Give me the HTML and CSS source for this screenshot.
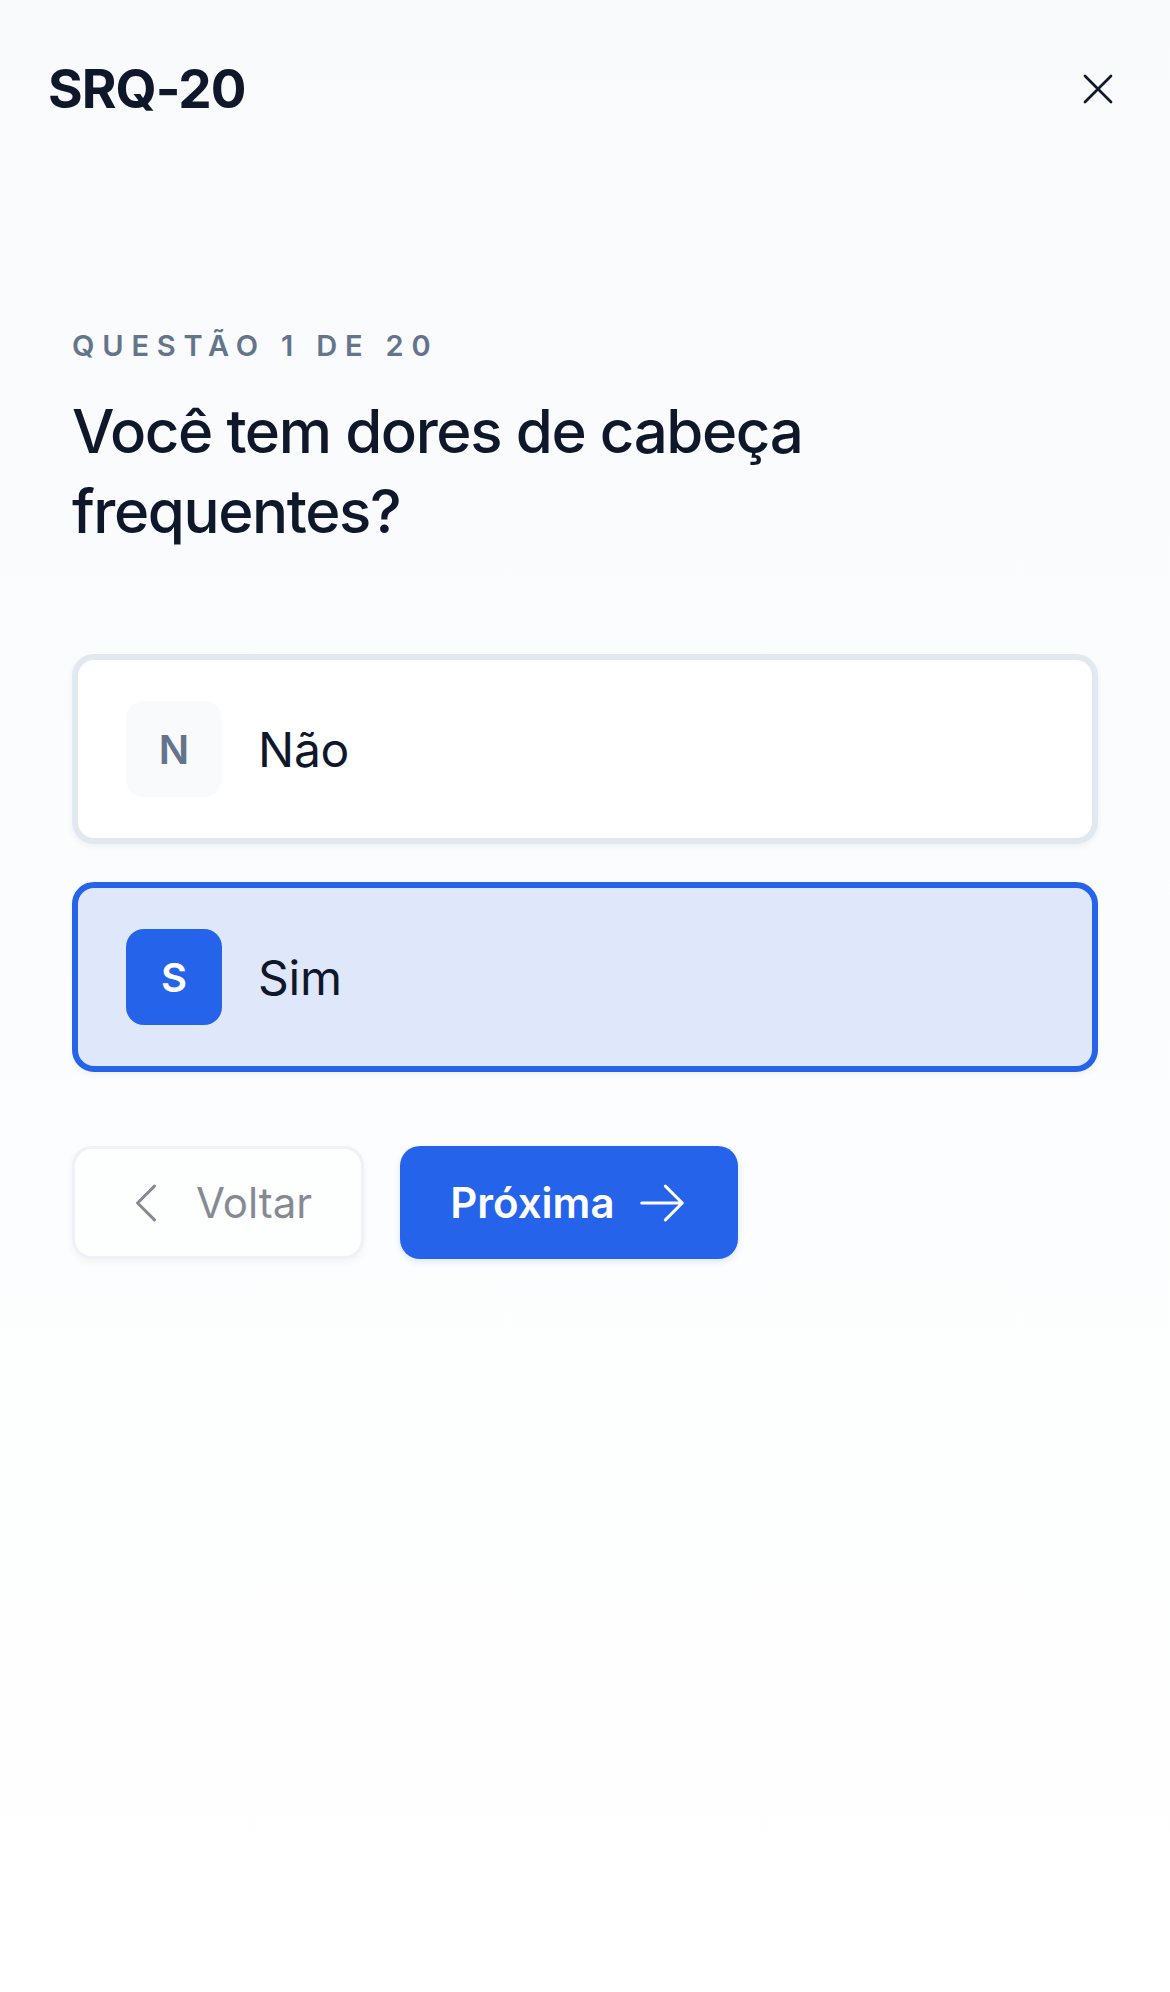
FILE: index.html
```html
<!DOCTYPE html>
<html lang="pt-BR">
<head>
    <meta charset="UTF-8" />
    <title>SRQ-20</title>
    <link rel="stylesheet" href="styles.css">
</head>
<body>
    <div class="screen">
        <header class="topbar">
            <h1 class="brand">SRQ-20</h1>
            <button class="close-btn" aria-label="Fechar">
                <svg viewBox="0 0 24 24" width="52" height="52" fill="none" stroke="currentColor" stroke-width="1.25" stroke-linecap="round" stroke-linejoin="round">
                    <path d="M6 18 18 6M6 6l12 12" />
                </svg>
            </button>
        </header>

        <main class="question">
            <p class="step">Questão 1 de 20</p>
            <h2 class="prompt">Você tem dores de cabeça frequentes?</h2>

            <div class="options">
                <button class="option">
                    <span class="key">N</span>
                    <span class="label">Não</span>
                </button>
                <button class="option selected">
                    <span class="key">S</span>
                    <span class="label">Sim</span>
                </button>
            </div>

            <div class="actions">
                <button class="btn btn-back" disabled>
                    <svg viewBox="0 0 24 24" width="54" height="54" fill="none" stroke="currentColor" stroke-width="1.35" stroke-linecap="round" stroke-linejoin="round">
                        <path d="M15.75 19.5 8.25 12l7.5-7.5" />
                    </svg>
                    Voltar
                </button>
                <button class="btn btn-next">
                    Próxima
                    <svg viewBox="0 0 24 24" width="54" height="54" fill="none" stroke="currentColor" stroke-width="1.35" stroke-linecap="round" stroke-linejoin="round">
                        <path d="M13.5 4.5 21 12m0 0-7.5 7.5M21 12H3" />
                    </svg>
                </button>
            </div>
        </main>
    </div>
</body>
</html>
```

FILE: styles.css
```css
* {
    box-sizing: border-box;
}

body {
    margin: 0;
    font-family: Inter, "Noto Sans", sans-serif;
    color: #0f172a;
    background: linear-gradient(to bottom, #f8fafc, #ffffff);
    min-height: 1992px;
}

button {
    font-family: inherit;
    cursor: pointer;
}

.topbar {
    display: flex;
    justify-content: space-between;
    align-items: center;
    height: 178px;
    padding: 0 46px 0 48px;
}

.brand {
    margin: 0;
    font-size: 53px;
    font-weight: 700;
    letter-spacing: -1px;
    color: #0f172a;
}

.close-btn {
    display: flex;
    padding: 0;
    border: 0;
    background: none;
    color: #0f172a;
}

.question {
    padding: 148px 72px 0;
}

.step {
    margin: 0;
    font-size: 29px;
    line-height: 40px;
    font-weight: 600;
    letter-spacing: 0.27em;
    text-transform: uppercase;
    color: #64748b;
}

.prompt {
    margin: 25px 0 0;
    max-width: 900px;
    font-size: 60px;
    line-height: 80px;
    font-weight: 500;
    letter-spacing: -1.4px;
    color: #0f172a;
}

.options {
    display: flex;
    flex-direction: column;
    gap: 38px;
    margin-top: 103px;
}

.option {
    display: flex;
    align-items: center;
    gap: 36px;
    height: 190px;
    padding: 0 48px;
    border: 6px solid #e2e8f0;
    border-radius: 22px;
    background: #ffffff;
    box-shadow: 0 3px 6px rgba(15, 23, 42, 0.05);
    text-align: left;
}

.option .key {
    display: flex;
    align-items: center;
    justify-content: center;
    width: 96px;
    height: 96px;
    border-radius: 18px;
    background: #f8fafc;
    font-size: 40px;
    font-weight: 600;
    color: #64748b;
}

.option .label {
    font-size: 48px;
    font-weight: 400;
    letter-spacing: -0.25px;
    color: #0f172a;
}

.option.selected {
    border-color: #2563eb;
    background: #dfe7fa;
}

.option.selected .key {
    background: #2563eb;
    color: #ffffff;
}

.actions {
    display: flex;
    gap: 36px;
    margin-top: 74px;
}

.btn {
    display: flex;
    align-items: center;
    height: 113px;
    border-radius: 20px;
    font-size: 42px;
}

.btn-back {
    gap: 23px;
    padding: 0 49px 0 44px;
    border: 3px solid #e2e8f0;
    background: #ffffff;
    color: #0f172a;
    font-weight: 400;
    opacity: 0.5;
    box-shadow: 0 3px 6px rgba(15, 23, 42, 0.08);
    cursor: default;
}

.btn-next {
    gap: 20px;
    padding: 0 49px 0 50px;
    border: 0;
    background: #2563eb;
    color: #ffffff;
    font-weight: 600;
    box-shadow: 0 3px 6px rgba(37, 99, 235, 0.15);
}
```
